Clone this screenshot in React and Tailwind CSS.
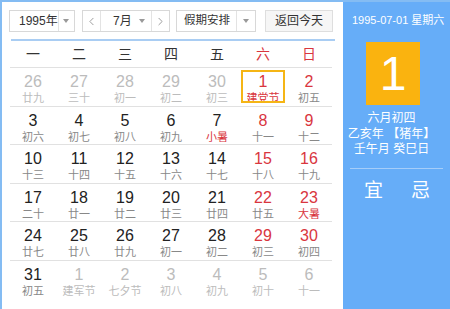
import { ChevronLeft, ChevronRight } from "lucide-react";

const weekdays = ["一", "二", "三", "四", "五", "六", "日"];

// [day, lunar, muted, redNum, redLunar, selected]
const rows = [
  [
    [26, "廿九", true],
    [27, "三十", true],
    [28, "初一", true],
    [29, "初二", true],
    [30, "初三", true],
    [1, "建党节", false, true, true, true],
    [2, "初五", false, true],
  ],
  [
    [3, "初六"],
    [4, "初七"],
    [5, "初八"],
    [6, "初九"],
    [7, "小暑", false, false, true],
    [8, "十一", false, true],
    [9, "十二", false, true],
  ],
  [
    [10, "十三"],
    [11, "十四"],
    [12, "十五"],
    [13, "十六"],
    [14, "十七"],
    [15, "十八", false, true],
    [16, "十九", false, true],
  ],
  [
    [17, "二十"],
    [18, "廿一"],
    [19, "廿二"],
    [20, "廿三"],
    [21, "廿四"],
    [22, "廿五", false, true],
    [23, "大暑", false, true, true],
  ],
  [
    [24, "廿七"],
    [25, "廿八"],
    [26, "廿九"],
    [27, "初一"],
    [28, "初二"],
    [29, "初三", false, true],
    [30, "初四", false, true],
  ],
  [
    [31, "初五"],
    [1, "建军节", true],
    [2, "七夕节", true],
    [3, "初八", true],
    [4, "初九", true],
    [5, "初十", true],
    [6, "十一", true],
  ],
];

const Caret = () => (
  <span className="flex h-full w-[19px] items-center justify-center border-l border-[#e3e3e3]">
    <span className="h-0 w-0 border-x-[3px] border-t-[4px] border-x-transparent border-t-[#999]" />
  </span>
);

const App = () => {
  return (
    <div className="flex h-[309px] w-[450px] border-l-2 border-t-2 border-[#84bcf3] font-['Liberation_Sans','Noto_Sans_CJK_SC',sans-serif]">
      <div className="w-[341px] bg-white pl-[7px]">
        {/* toolbar */}
        <div className="mt-[8px] flex h-[22px] items-center whitespace-nowrap text-[12px] text-[#333]">
          <div className="flex h-full w-[66px] items-center border border-[#d8d8d8]">
            <span className="flex-1 pl-[9px]">1995年</span>
            <Caret />
          </div>
          <div className="ml-[7px] flex h-full w-[88px] items-center border border-[#d8d8d8]">
            <span className="flex h-full w-[18px] items-center justify-center border-r border-[#e3e3e3]">
              <ChevronLeft size={13} strokeWidth={1.5} className="text-[#888]" />
            </span>
            <span className="flex h-full flex-1 items-center">
              <span className="flex-1 pl-[12px]">7月</span>
              <span className="mr-[6px] h-0 w-0 border-x-[3px] border-t-[4px] border-x-transparent border-t-[#999]" />
            </span>
            <span className="flex h-full w-[18px] items-center justify-center border-l border-[#e3e3e3]">
              <ChevronRight size={13} strokeWidth={1.5} className="text-[#888]" />
            </span>
          </div>
          <div className="ml-[6px] flex h-full w-[80px] items-center border border-[#d8d8d8]">
            <span className="flex-1 pl-[7px] text-[11.5px]">假期安排</span>
            <Caret />
          </div>
          <div className="ml-[9px] flex h-full w-[68px] items-center justify-center border border-[#dedede] bg-[#f6f6f6]">
            返回今天
          </div>
        </div>

        <div className="ml-[2px] mt-[7px] h-[2px] w-[324px] bg-[#a9cdf3]" />

        {/* calendar grid */}
        <div className="ml-[1px] w-[322px]">
          <div className="grid h-[27px] grid-cols-7 border-b border-[#e1e1e1] text-[14px]">
            {weekdays.map((w, i) => (
              <div
                key={w}
                className={`flex items-center justify-center ${i >= 5 ? "text-[#d9363e]" : "text-[#333]"}`}
              >
                {w}
              </div>
            ))}
          </div>
          {rows.map((row, r) => (
            <div
              key={r}
              className={`grid h-[38.6px] grid-cols-7 ${r < rows.length - 1 ? "border-b border-[#e1e1e1]" : ""}`}
            >
              {row.map(([day, lunar, muted, redNum, redLunar, selected], c) => (
                <div key={c} className="relative flex flex-col items-center pt-[4px]">
                  {selected && (
                    <div className="absolute inset-x-[1px] bottom-[3px] top-[2px] border-2 border-[#f5b515]" />
                  )}
                  <span
                    className={`text-[16px] leading-[19px] ${
                      muted ? "text-[#bcbcbc]" : redNum ? "text-[#d9363e]" : "text-[#222]"
                    }`}
                  >
                    {day}
                  </span>
                  <span
                    className={`text-[11px] leading-[14px] ${
                      muted ? "text-[#bcbcbc]" : redLunar ? "text-[#d9363e]" : "text-[#888]"
                    }`}
                  >
                    {lunar}
                  </span>
                </div>
              ))}
            </div>
          ))}
        </div>
      </div>

      {/* side panel */}
      <div className="flex flex-1 flex-col bg-[#66adf8] text-white">
        <div className="mt-[10px] whitespace-nowrap pl-[9px] text-[11px] leading-[16px]">1995-07-01 星期六</div>
        <div className="ml-[23px] mt-[14px] flex h-[63px] w-[54px] items-center justify-center bg-[#fab30f] text-[48px] font-light leading-none">
          1
        </div>
        <div className="mt-[6px] flex w-[97px] flex-col items-center whitespace-nowrap text-[12px] leading-[15.5px]">
          <span>六月初四</span>
          <span>乙亥年 【猪年】</span>
          <span>壬午月 癸巳日</span>
        </div>
        <div className="ml-[7px] mt-[10px] h-px w-[93px] bg-[#a5cdf9]" />
        <div className="ml-[4px] mt-[10px] flex w-[100px] justify-center gap-[28px] text-[19px] leading-[24px]">
          <span>宜</span>
          <span>忌</span>
        </div>
      </div>
    </div>
  );
};

export default App;
